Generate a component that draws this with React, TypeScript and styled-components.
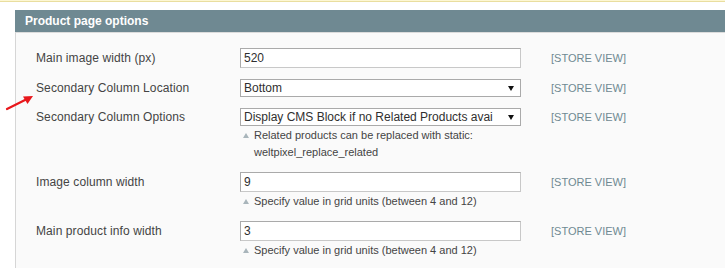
import React from "react";
import styled, { createGlobalStyle } from "styled-components";

const Global = createGlobalStyle`
  html, body { margin: 0; padding: 0; background: #fff; }
  body {
    font-family: Arial, "Liberation Sans", Helvetica, sans-serif;
    font-size: 12px;
    color: #444;
  }
  * { box-sizing: border-box; }
`;

const Page = styled.div`
  position: relative;
  width: 725px;
  height: 268px;
  overflow: hidden;
  background: #fff;
`;

const Notice = styled.div`
  height: 2px;
  background: #fdf7d3;
  border-bottom: 1px solid #e9de9f;
`;

const Section = styled.section`
  margin: 8px 0 0 15px;
`;

const Head = styled.div`
  height: 22px;
  background: #6f8992;
  color: #fff;
  font-weight: bold;
  font-size: 12px;
  line-height: 22px;
  padding-left: 10px;
`;

const Body = styled.div`
  background: #fafafa;
  border-left: 1px solid #d6d6d6;
  border-top: 1px solid #dcdcdc;
  padding: 10px 0 20px 20px;
`;

const Row = styled.div`
  display: grid;
  grid-template-columns: 204px 281px 1fr;
  padding: 5px 0 6px;
`;

const Label = styled.div<{ $h: number }>`
  line-height: ${(p) => p.$h}px;
  font-size: 12px;
  letter-spacing: 0.1px;
  color: #444;
  white-space: nowrap;
`;

const Scope = styled.div<{ $h: number }>`
  line-height: ${(p) => p.$h}px;
  padding-left: 30px;
  font-size: 11px;
  color: #6f8992;
  white-space: nowrap;
`;

const ValueCell = styled.div`
  display: flex;
  flex-direction: column;
`;

const TextField = styled.input`
  display: block;
  width: 281px;
  height: 20px;
  margin: 0;
  padding: 0 3px;
  border: 1px solid;
  border-color: #aaa #c8c8c8 #c8c8c8 #aaa;
  background: #fff;
  font: 12px Arial, "Liberation Sans", sans-serif;
  color: #2f2f2f;
  outline: none;
`;

const SelectBox = styled.div`
  display: flex;
  align-items: center;
  width: 281px;
  height: 18px;
  padding: 0 6px 0 3px;
  border: 1px solid #aaa;
  background: #fff;
  font-size: 12px;
  color: #2f2f2f;
`;

const SelectText = styled.span`
  flex: 1;
  white-space: nowrap;
  margin-right: 6px;
`;

const Caret = styled.span`
  width: 0;
  height: 0;
  border-left: 3px solid transparent;
  border-right: 3px solid transparent;
  border-top: 5px solid #111;
`;

const Note = styled.div`
  position: relative;
  margin-top: 1px;
  padding-left: 14px;
  font-size: 11px;
  line-height: 17px;
  color: #444;
  &::before {
    content: "";
    position: absolute;
    left: 3px;
    top: 6px;
    width: 0;
    height: 0;
    border-left: 3px solid transparent;
    border-right: 3px solid transparent;
    border-bottom: 5px solid #a9b5bb;
  }
`;

const Pointer = styled.svg`
  position: absolute;
  left: 0;
  top: 90px;
`;

type Field = {
  label: string;
  kind: "input" | "select";
  value: string;
  note?: string[];
};

const fields: Field[] = [
  { label: "Main image width (px)", kind: "input", value: "520" },
  { label: "Secondary Column Location", kind: "select", value: "Bottom" },
  {
    label: "Secondary Column Options",
    kind: "select",
    value: "Display CMS Block if no Related Products avai",
    note: ["Related products can be replaced with static:", "weltpixel_replace_related"],
  },
  {
    label: "Image column width",
    kind: "input",
    value: "9",
    note: ["Specify value in grid units (between 4 and 12)"],
  },
  {
    label: "Main product info width",
    kind: "input",
    value: "3",
    note: ["Specify value in grid units (between 4 and 12)"],
  },
];

export default function App() {
  return (
    <Page>
      <Global />
      <Notice />
      <Section>
        <Head>Product page options</Head>
        <Body>
          {fields.map((f) => {
            const h = f.kind === "input" ? 20 : 18;
            return (
              <Row key={f.label}>
                <Label $h={h}>{f.label}</Label>
                <ValueCell>
                  {f.kind === "input" ? (
                    <TextField value={f.value} readOnly />
                  ) : (
                    <SelectBox>
                      <SelectText>{f.value}</SelectText>
                      <Caret />
                    </SelectBox>
                  )}
                  {f.note && (
                    <Note>
                      {f.note.map((line) => (
                        <div key={line}>{line}</div>
                      ))}
                    </Note>
                  )}
                </ValueCell>
                <Scope $h={h}>[STORE VIEW]</Scope>
              </Row>
            );
          })}
        </Body>
      </Section>
      <Pointer width="40" height="24" viewBox="0 90 40 24">
        <line x1="7" y1="109" x2="26" y2="99.5" stroke="#e8171b" strokeWidth="2.2" strokeLinecap="round" />
        <polygon points="33,96 23,96.5 27.5,104" fill="#e8171b" />
      </Pointer>
    </Page>
  );
}
